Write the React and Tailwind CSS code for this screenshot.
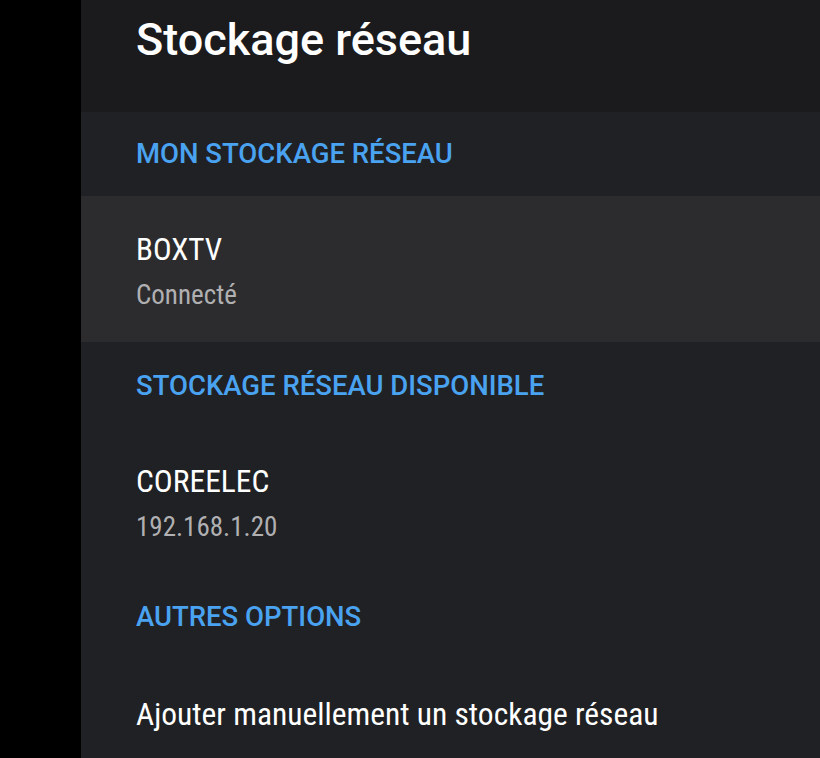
export default function App() {
  const cond = { fontFamily: '"Roboto Condensed", Roboto, sans-serif' };
  return (
    <div className="flex w-[820px] h-[758px] bg-black overflow-hidden" style={{ fontFamily: 'Roboto, "Noto Sans", sans-serif' }}>
      <div className="w-[81px] shrink-0 bg-black" />
      <div className="flex-1 flex flex-col bg-[#202124]">
        <div className="h-[112px] shrink-0 bg-[#1b1b1d] pl-[55px] pt-[14px]">
          <h1 className="text-[45px] leading-[52px] font-medium text-white">Stockage réseau</h1>
        </div>
        <div className="h-[84px] shrink-0 flex items-center pl-[55px]">
          <span className="text-[27.5px] font-medium text-[#4aa3f0]">MON STOCKAGE RÉSEAU</span>
        </div>
        <div className="h-[146px] shrink-0 bg-[#2c2c2e] flex flex-col items-start pt-[33px] pl-[55px]" style={cond}>
          <span className="text-[31px] leading-[42px] text-white">BOXTV</span>
          <span className="text-[27px] leading-[48px] text-[#b0b0b2]">Connecté</span>
        </div>
        <div className="h-[88px] shrink-0 flex items-center pl-[55px]">
          <span className="text-[27.5px] font-medium text-[#4aa3f0]">STOCKAGE RÉSEAU DISPONIBLE</span>
        </div>
        <div className="h-[162px] shrink-0 flex flex-col items-start pt-[31px] pl-[55px]" style={cond}>
          <span className="text-[31.5px] leading-[42px] text-white">COREELEC</span>
          <span className="text-[27px] leading-[48px] text-[#b0b0b2]">192.168.1.20</span>
        </div>
        <div className="h-[50px] shrink-0 flex items-center pl-[55px]">
          <span className="text-[27.5px] font-medium text-[#4aa3f0]">AUTRES OPTIONS</span>
        </div>
        <div className="flex-1 flex items-start pt-[52px] pl-[55px]" style={cond}>
          <span className="text-[31.5px] leading-[42px] text-white whitespace-nowrap">Ajouter manuellement un stockage réseau</span>
        </div>
      </div>
    </div>
  );
}
